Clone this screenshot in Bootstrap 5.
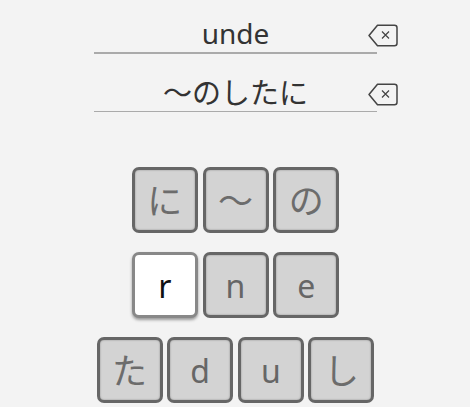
<!DOCTYPE html>
<html lang="ja">
<head>
<meta charset="utf-8">
<title>Keys</title>
<link href="https://cdn.jsdelivr.net/npm/bootstrap@5.3.0/dist/css/bootstrap.min.css" rel="stylesheet">
<style>
html,body{height:407px;overflow:hidden}
body{background:#f3f3f3;width:470px;font-family:"Open Sans","Noto Sans CJK JP",sans-serif}
.stage{padding-top:16px}
.entry{width:304px;margin-left:94px;height:38px;margin-bottom:21px}
.entry-text{width:283px;height:38px;border-bottom:2px solid #aaa;text-align:center;font-size:28px;line-height:34px;color:#333;font-family:"Noto Sans",sans-serif}
.entry-two .entry-text{border-bottom-width:1px;height:37px;line-height:33px;font-family:"Noto Sans CJK JP",sans-serif;font-size:29px;font-weight:400}
.entry-two{margin-bottom:0;height:37px}
.erase{margin-left:-9px;margin-top:8px;flex:none}
.key-rows{padding-top:55px}
.key-row{height:66px;margin-bottom:19px;gap:4.67px;padding-left:1px}
.tile{width:66px;height:66px;border:3px solid #666;border-radius:7px;background:#d3d3d3;color:#666;font-size:32px;line-height:62px;text-align:center;box-shadow:inset 0 0 2px #888;padding:0;font-family:"Noto Sans",sans-serif}
.tile-jp{font-family:"Noto Sans CJK JP",sans-serif;font-weight:400;font-size:35px;color:#6c6c6c;line-height:57px}
.tile-on{background:#fff;color:#111;border-color:#888;box-shadow:0 2px 3px #999}
</style>
</head>
<body>
<div class="stage">
  <div class="entry d-flex">
    <div class="entry-text">unde</div>
    <svg class="erase" width="30" height="23" viewBox="0 0 30 23" fill="none" stroke="#444" stroke-width="1.500"><path d="M9.500 1.200H26.500Q29 1.200 29 3.700V19.300Q29 21.800 26.500 21.800H9.500L1 11.500Z" stroke-linejoin="round"/><path d="M14 7.500L21 14.500M21 7.500L14 14.500" stroke-width="1.200"/></svg>
  </div>
  <div class="entry entry-two d-flex">
    <div class="entry-text">〜のしたに</div>
    <svg class="erase" width="30" height="23" viewBox="0 0 30 23" fill="none" stroke="#444" stroke-width="1.500"><path d="M9.500 1.200H26.500Q29 1.200 29 3.700V19.300Q29 21.800 26.500 21.800H9.500L1 11.500Z" stroke-linejoin="round"/><path d="M14 7.500L21 14.500M21 7.500L14 14.500" stroke-width="1.200"/></svg>
  </div>
  <div class="key-rows">
    <div class="key-row d-flex justify-content-center">
      <div class="tile tile-jp">に</div><div class="tile tile-jp">〜</div><div class="tile tile-jp">の</div>
    </div>
    <div class="key-row d-flex justify-content-center">
      <div class="tile tile-on">r</div><div class="tile">n</div><div class="tile">e</div>
    </div>
    <div class="key-row d-flex justify-content-center">
      <div class="tile tile-jp">た</div><div class="tile">d</div><div class="tile">u</div><div class="tile tile-jp">し</div>
    </div>
  </div>
</div>
<script src="https://cdn.jsdelivr.net/npm/bootstrap@5.3.0/dist/js/bootstrap.bundle.min.js"></script>
</body>
</html>
